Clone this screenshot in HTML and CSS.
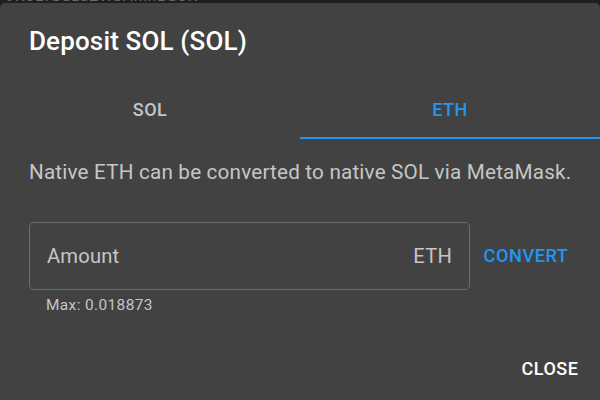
FILE: index.html
```html
<!DOCTYPE html>
<html lang="en">
<head>
<meta charset="utf-8">
<title>Deposit SOL</title>
<link rel="stylesheet" href="styles.css">
</head>
<body>
<div class="page"><span class="behind">9X3LTbuLaZWbAmhBdCK</span></div>
<div class="dialog">
  <h2 class="title">Deposit SOL (SOL)</h2>
  <div class="tabs">
    <button class="tab">SOL</button>
    <button class="tab active">ETH</button>
  </div>
  <div class="content">
    <p class="note">Native ETH can be converted to native SOL via MetaMask.</p>
    <div class="row">
      <div class="field-wrap">
        <div class="field"><span class="placeholder">Amount</span><span class="adorn">ETH</span></div>
        <div class="helper">Max: 0.018873</div>
      </div>
      <button class="convert">CONVERT</button>
    </div>
  </div>
  <div class="actions"><button class="close">CLOSE</button></div>
</div>
</body>
</html>
```

FILE: styles.css
```css
* { box-sizing: border-box; }
html, body { margin: 0; padding: 0; }
body {
  width: 600px;
  height: 400px;
  overflow: hidden;
  background: #1f1f1f;
  font-family: Roboto, "Liberation Sans", sans-serif;
  position: relative;
}
.page {
  height: 3px;
  overflow: hidden;
  position: relative;
}
.behind {
  position: absolute;
  left: 6px;
  top: -12px;
  font-size: 15px;
  line-height: 16px;
  color: #6a6a6a;
  letter-spacing: 1px;
}
.dialog {
  position: absolute;
  left: 0;
  top: 3px;
  width: 600px;
  height: 397px;
  overflow: hidden;
  background: #424242;
  border-radius: 5px 5px 0 0;
  display: flex;
  flex-direction: column;
}
.title {
  margin: 0;
  padding: 19px 29px 20px;
  font-size: 26px;
  line-height: 38px;
  font-weight: 500;
  color: #fff;
  letter-spacing: 0.15px;
}
.tabs {
  display: flex;
  height: 59px;
  flex-shrink: 0;
}
.tab {
  flex: 1;
  border: 0;
  background: transparent;
  font-family: inherit;
  font-size: 18px;
  font-weight: 500;
  letter-spacing: 0.5px;
  color: #c6c6c6;
  padding: 0;
  border-bottom: 2.4px solid transparent;
  padding-top: 2px;
}
.tab.active {
  color: #2196f3;
  border-bottom-color: #2196f3;
}
.content {
  padding: 19px 20px 0 29px;
}
.note {
  margin: 0;
  font-size: 20.7px;
  line-height: 28.8px;
  color: #c6c6c6;
  letter-spacing: 0.18px;
  white-space: nowrap;
}
.row {
  display: flex;
  align-items: flex-start;
  margin-top: 35px;
}
.field-wrap {
  width: 441px;
  flex-shrink: 0;
}
.field {
  height: 68px;
  border: 1px solid #6d6d6d;
  border-radius: 5px;
  display: flex;
  align-items: center;
  justify-content: space-between;
  padding: 0 17px 0 17px;
  font-size: 20.2px;
  color: #c6c6c6;
  letter-spacing: 0.18px;
}
.helper {
  margin: 3.6px 17px 0;
  font-size: 15.4px;
  line-height: 24px;
  color: #c6c6c6;
  letter-spacing: 0.4px;
}
.convert {
  margin-left: 4px;
  margin-top: 12px;
  height: 43px;
  padding: 0 9.6px;
  border: 0;
  background: transparent;
  font-family: inherit;
  font-size: 18.2px;
  font-weight: 500;
  letter-spacing: 0.5px;
  color: #2196f3;
  white-space: nowrap;
}
.actions {
  display: flex;
  justify-content: flex-end;
  padding: 0 12px;
  margin-top: 30px;
}
.close {
  height: 43px;
  padding: 0 9.6px;
  border: 0;
  background: transparent;
  font-family: inherit;
  font-size: 18px;
  font-weight: 500;
  letter-spacing: 0.5px;
  color: #fff;
}
```
